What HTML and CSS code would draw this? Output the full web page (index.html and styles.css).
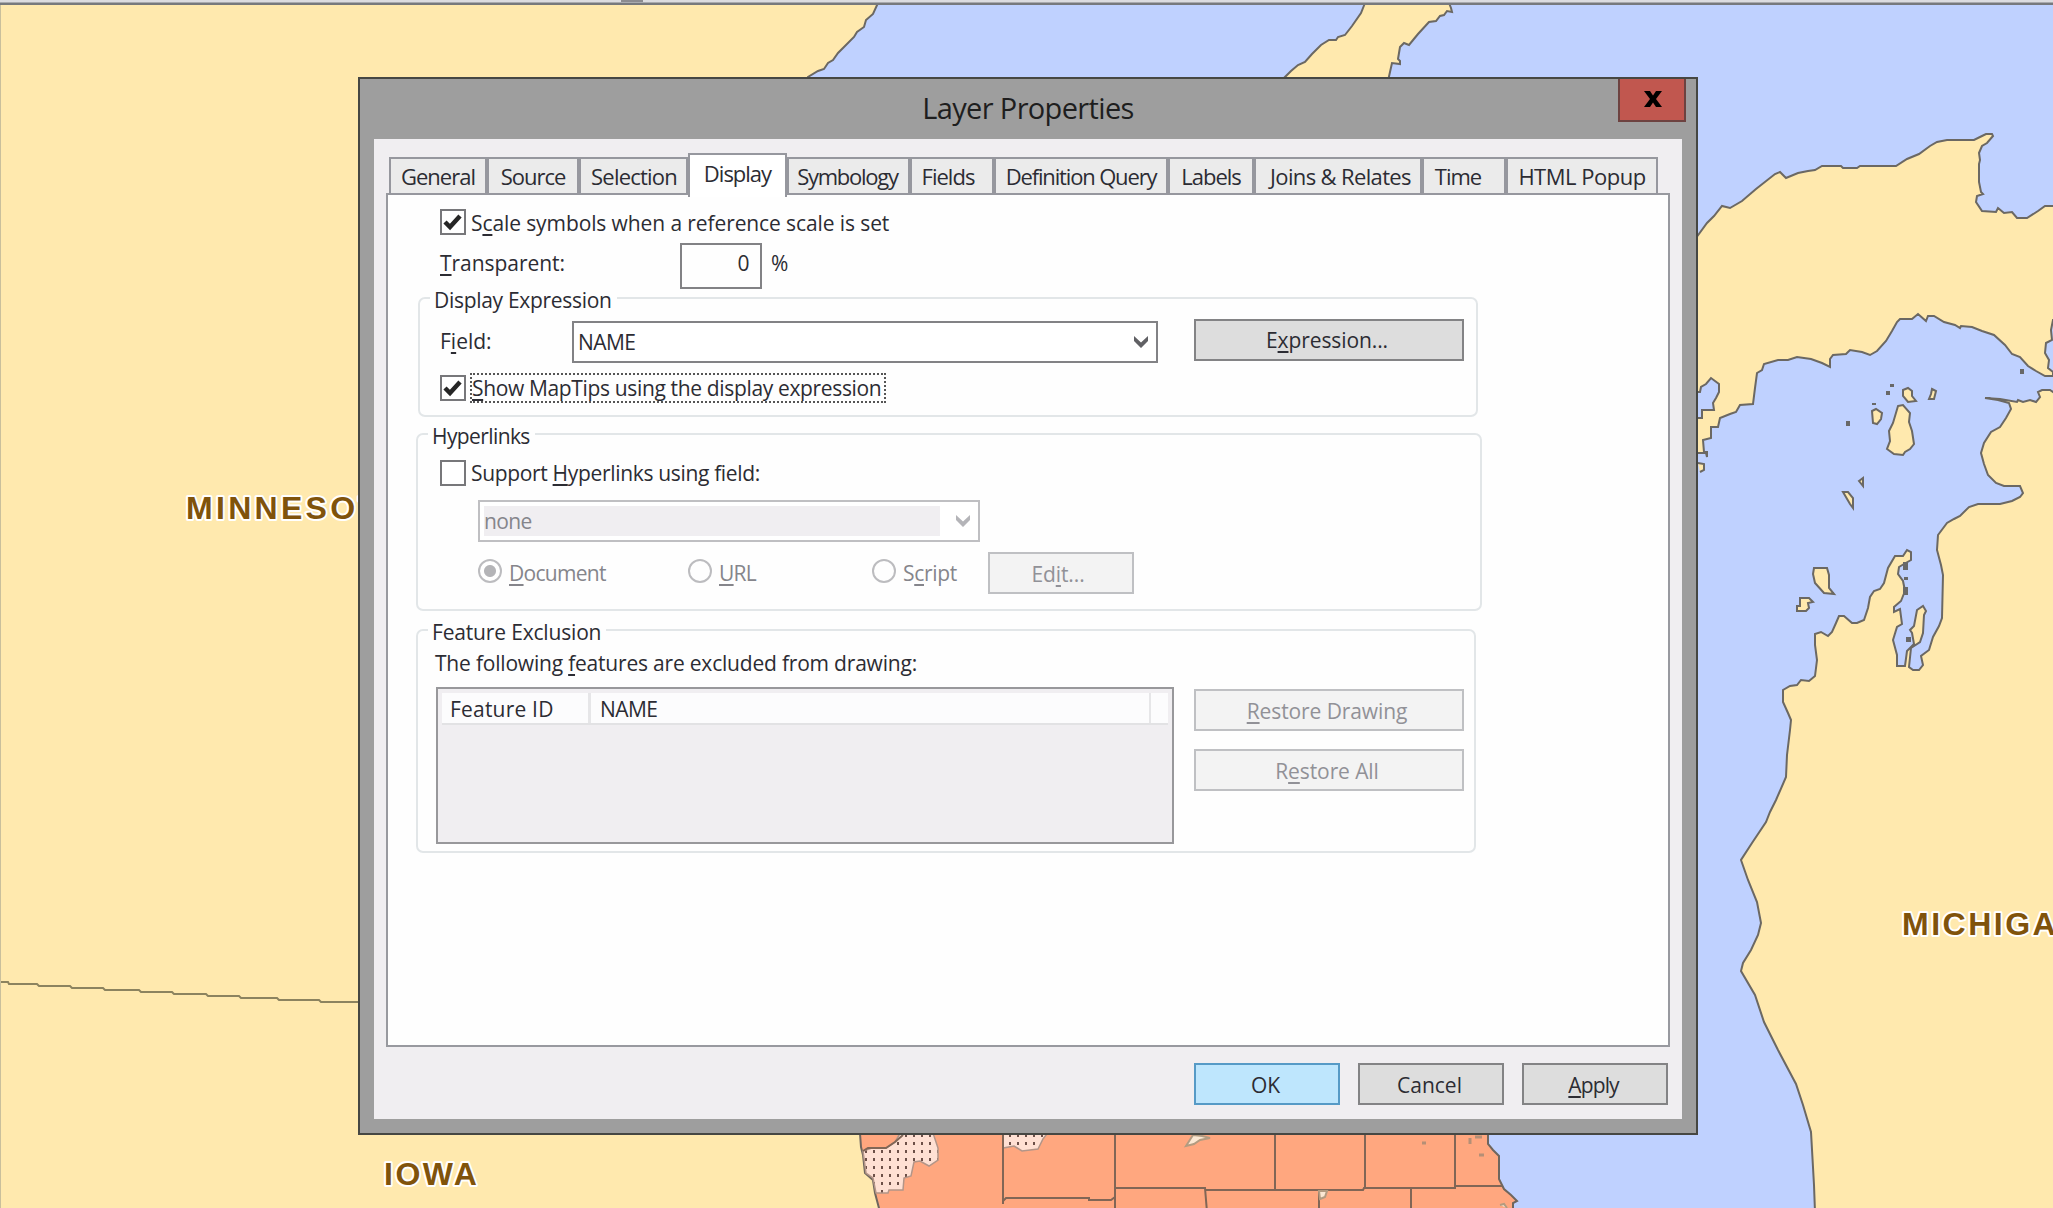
FILE: index.html
```html
<!DOCTYPE html>
<html lang="en">
<head>
<meta charset="utf-8">
<title>Layer Properties</title>
<link rel="stylesheet" href="styles.css">
</head>
<body>
<svg class="map" width="2053" height="1208" viewBox="0 0 2053 1208">
  <defs>
    <pattern id="dots" x="873" y="1150" width="8" height="8" patternUnits="userSpaceOnUse">
      <rect width="8" height="8" fill="#ffe0d3"/><rect width="2" height="3" fill="#6d5048"/>
    </pattern>
  </defs>
  <rect width="2053" height="1208" fill="#bfd1ff"/>
  <g class="land">
    <path d="M-3 3H878L873 14 866 20 864 27 857 32 854 37 843 48 838 53 833 60 828 63 824 69 818 71 808 77 900 900 880 1212H-3Z"/>
    <path d="M1365 3L1361 13 1352 26 1345 35 1338 37 1336 40 1329 40 1321 45 1312 54 1305 62 1298 65 1291 71 1284 78V90H1386L1390 72 1392 63 1400 64V61L1398 59 1400 47 1404 43 1409 45 1418 34 1429 22 1436 21 1440 16 1444 15 1447 11 1452 12 1451 8 1449 3Z"/>
    <path d="M1696 238L1707 223 1714 216 1722 206 1730 208 1742 201 1756 189 1775 174 1780 172 1786 178 1798 173 1808 171 1815 170 1822 166H1841L1843 168H1857L1860 166H1896L1907 159 1919 154 1930 146 1937 142 1947 140H1974L1982 136 1986 134 1992 134 1993 136 1987 143 1982 146 1979 153 1980 160 1979 164V182L1981 192 1983 194 1977 196 1976 202 1982 211 1996 212 1998 208 2004 213 2012 212 2017 218H2027L2038 211 2045 206H2056V320H2053L2051 330 2052 340 2046 343 2045 353 2049 360 2048 368 2053 372V376H2045L2036 371 2028 366 2020 357 2012 354 2005 345 1994 335 1982 331 1972 327 1961 326 1960 328 1955 325 1944 322 1934 316 1928 316 1926 321 1918 314 1912 319H1900L1897 322 1892 331 1886 341 1877 351 1870 355 1862 352 1850 350 1846 354 1833 355 1830 359 1830 367 1822 363 1811 359 1797 357 1788 360H1778L1764 364 1762 370 1757 373 1755 388 1753 404 1740 405 1736 412 1730 414 1720 418 1718 427 1711 427 1711 438 1703 440 1704 452H1707V457L1706 453H1696Z"/>
    <path d="M1985 398L2000 399 2017 402 2018 400 2023 402 2030 400 2036 402 2040 397 2038 392 2042 390H2050L2056 394V1212H1815L1814 1185 1811 1132 1803 1105 1796 1084 1778 1050 1764 1022 1755 995 1741 971 1743 963 1751 950 1758 935 1761 923 1757 902 1748 880 1741 860 1752 843 1766 822 1770 812 1776 800 1786 777 1787 755 1790 730 1791 720 1788 713 1783 702V690L1790 686 1797 685 1801 680 1809 681 1815 676 1817 660 1815 645 1815 634 1821 632 1828 636 1832 632 1836 623 1839 616 1844 616 1852 623H1857L1864 620 1868 608 1870 597 1874 591 1880 589 1884 583 1888 568 1895 556H1903L1907 550 1911 552 1911 560 1904 564 1899 567 1898 574 1903 581 1905 591 1901 601 1894 607V612L1900 609 1902 624 1897 627 1893 640 1897 655V666H1905L1907 651 1914 644 1912 633 1910 630 1914 626 1917 610 1923 606 1926 611 1924 615 1923 633 1920 642 1911 648 1909 667 1913 670H1919L1923 665 1921 656 1929 650 1933 637 1939 626 1942 618 1943 575 1941 565 1937 550 1938 535 1947 523 1954 519 1960 516 1969 507 1978 504H2000L2012 501 2020 497 2023 493 2020 486H2004L1996 483 1988 475 1984 464 1981 453 1984 443 1991 432 2000 427 2006 418 2011 409 2009 403 1998 400Z"/>
    <path d="M1898 406L1903 405 1910 413 1909 422 1912 431 1914 444 1910 449 1905 452 1903 455 1894 454 1887 449 1890 441 1889 431 1893 423Z"/>
    <path d="M1872 411L1876 409 1882 413 1881 419 1877 424 1873 423Z"/>
    <path d="M1903 390L1908 388 1912 391 1912 396 1916 401 1908 402 1903 396Z"/>
    <path d="M1932 389L1936 391 1934 399 1929 399 1931 394Z"/>
    <path d="M1843 492L1848 492 1853 498 1853 508 1850 504Z"/><path d="M1859 481L1863 478 1863 486Z"/>
    <path d="M1814 568H1827L1829 575V588L1834 594 1824 593 1815 583 1813 574Z"/>
    <path d="M1800 598H1809L1813 602 1808 603 1809 608 1806 611H1797V606H1800Z"/>
    <path d="M1698 463L1704 464 1704 470 1700 472"/>
  </g>
  <path d="M1696 392H1700L1701 387 1706 384 1711 378 1719 384 1719 392 1716 398 1713 403 1714 410 1702 410V418H1696Z" fill="#bfd1ff" stroke="#6b6863" stroke-width="2"/>
  <g fill="#686868"><rect x="1846" y="421" width="4" height="5"/><rect x="2020" y="369" width="4" height="5"/><rect x="1886" y="391" width="4" height="4"/><rect x="1890" y="384" width="4" height="3"/><rect x="1903" y="562" width="5" height="8"/><rect x="1904" y="577" width="4" height="3"/><rect x="1903" y="587" width="5" height="8"/><rect x="1906" y="637" width="5" height="5"/><rect x="1872" y="403" width="4" height="2"/></g>
  <path d="M0 982H8L9 984H37L39 986H70L72 988H103L105 990H139L141 992H172L174 994H206L208 996H239L241 998H277L279 1000H319L321 1002H360" fill="none" stroke="#8c835f" stroke-width="2"/>
  <g class="counties">
    <path class="fill" d="M859 1120L861 1147 863 1155 865 1173 873 1180 875 1193 880 1212H1513L1513 1203 1517 1201 1511 1195 1504 1189 1499 1179V1156L1493 1150 1488 1144V1120Z"/>
    <path class="mottled" d="M902 1130H932L938 1148V1160L929 1166 920 1161 914 1162 911 1176 904 1178 903 1190H889L888 1193H876L873 1178 866 1173 863 1151 872 1148 886 1148 895 1142Z"/>
    <path class="mottled" d="M1003 1130H1050L1043 1139 1038 1149 1022 1151 1014 1146 1003 1148Z"/>
    <path d="M863 1151L868 1148 886 1148 895 1142 903 1135M1003 1130V1204M1115 1130V1212M1275 1130V1190M1365 1130V1189M1455 1130V1188M1003 1201L1006 1198H1089V1200H1111L1115 1197M1115 1188H1205L1207 1212M1205 1190H1363L1364 1188H1455V1186H1502M1319 1190V1212M1411 1188V1212"/>
    <path class="lake" d="M1186 1146L1193 1135 1202 1136 1210 1138 1200 1140 1194 1144ZM1319 1191H1327L1325 1197 1320 1199ZM1500 1205L1504 1204 1507 1208"/>
    <path class="specks" d="M1422 1143h4M1479 1155h5M1470 1138v6M1475 1137h7"/>
  </g>
  <g class="state-names">
    <text class="minnesota" x="186" y="519">MINNESOTA</text>
    <text x="384" y="1185">IOWA</text>
    <text x="1902" y="935">MICHIGAN</text>
  </g>
  <rect width="1" height="1208" fill="#c9bf9c"/>
  <rect width="2053" height="3" fill="#dcdce0"/><rect y="2.5" width="2053" height="2.5" fill="#77797d"/><rect x="621" width="22" height="2" fill="#8b8b90"/>
</svg>

<section class="dialog">
  <header class="titlebar">
    <h1>Layer Properties</h1>
    <button class="close"><svg width="18" height="16" viewBox="0 0 18 16"><path d="M0 0H6L9 4.5 12 0H18L12 8 18 16H12L9 11.500 6 16H0L6 8Z"/></svg></button>
  </header>
  <div class="client">
    <nav class="tabs">
      <span class="tab w-general">General</span><span class="tab w-source">Source</span><span class="tab w-selection">Selection</span><span class="tab active">Display</span><span class="tab w-symbology">Symbology</span><span class="tab w-fields">Fields</span><span class="tab w-query">Definition Query</span><span class="tab w-labels">Labels</span><span class="tab w-joins">Joins &amp; Relates</span><span class="tab w-time">Time</span><span class="tab w-popup">HTML Popup</span>
    </nav>
    <main class="page">
      <label class="row scale"><span class="check"><svg viewBox="0 0 20 18"><path d="M2 9L7 14 17 3"/></svg></span><span class="label">S<u>c</u>ale symbols when a reference scale is set</span></label>
      <div class="row transparency"><span class="caption"><u>T</u>ransparent:</span><span class="number">0</span><span>%</span></div>

      <section class="group expression">
        <h2>Display Expression</h2>
        <div class="row field"><span class="caption">F<u>i</u>eld:</span><span class="combo">NAME<svg class="chevron" viewBox="0 0 14 12"><path d="M0 0L7 6.500 14 0V5L7 12 0 5Z"/></svg></span><button class="wide">E<u>x</u>pression...</button></div>
        <label class="row maptips"><span class="check"><svg viewBox="0 0 20 18"><path d="M2 9L7 14 17 3"/></svg></span><span class="focus"><u>S</u>how MapTips using the display expression</span></label>
      </section>

      <section class="group links">
        <h2>Hyperlinks</h2>
        <label class="row support"><span class="check"></span><span class="label">Support <u>H</u>yperlinks using field:</span></label>
        <div class="combo disabled"><span class="value">none</span><svg class="chevron" viewBox="0 0 14 12"><path d="M0 0L7 6.500 14 0V5L7 12 0 5Z"/></svg></div>
        <div class="row kinds">
          <label class="radio on"><i></i><span><u>D</u>ocument</span></label>
          <label class="radio url"><i></i><span><u>U</u>RL</span></label>
          <label class="radio script"><i></i><span>S<u>c</u>ript</span></label>
          <button class="edit off">Ed<u>i</u>t...</button>
        </div>
      </section>

      <section class="group exclusion">
        <h2>Feature Exclusion</h2>
        <p>The following <u>f</u>eatures are excluded from drawing:</p>
        <div class="row columns">
          <div class="list"><div class="head"><span class="id">Feature ID</span><span class="name">NAME</span><span class="rest"></span></div></div>
          <div class="stack"><button class="wide off"><u>R</u>estore Drawing</button><button class="wide off">R<u>e</u>store All</button></div>
        </div>
      </section>
    </main>
    <footer class="actions"><button class="ok">OK</button><button>Cancel</button><button class="apply"><u>A</u>pply</button></footer>
  </div>
</section>
</body>
</html>
```
FILE: styles.css
```css
* { box-sizing: border-box; }
body { margin: 0; width: 2053px; height: 1208px; overflow: hidden; position: relative;
  font: 21px/26px "Open Sans", "Noto Sans", sans-serif; letter-spacing: -0.6px; color: #2c2c33; background: #bfd1ff; }
h1, h2, p { margin: 0; font: inherit; }
u { text-decoration: underline; text-decoration-thickness: 2px; text-underline-offset: 3px; text-decoration-skip-ink: none; }

.map { display: block; }
.land path { fill: #ffe9ae; stroke: #6b6863; stroke-width: 2; }
.counties path { fill: none; stroke: #816656; stroke-width: 2; }
.counties .fill { fill: #ffa77f; stroke: #6f665e; }
.counties .mottled { fill: url(#dots); stroke: #b39588; stroke-width: 1.5; }
.counties .lake { fill: #fbe8d3; stroke: #b39b80; }
.counties .specks { stroke: #b58f76; stroke-width: 3; }
.state-names text { font: bold 32px "Liberation Sans", Arial, sans-serif; letter-spacing: 2.500px; fill: #80530b;
  stroke: #fff; stroke-width: 4px; stroke-linejoin: round; paint-order: stroke; }
.state-names .minnesota { letter-spacing: 3.300px; }

.dialog { position: absolute; left: 358px; top: 77px; width: 1340px; height: 1058px; padding: 0 14px 14px;
  border: 2px solid #464743; background: #9e9e9e; }
.titlebar { position: relative; height: 60px; display: flex; justify-content: center; }
.titlebar h1 { font-size: 29px; line-height: 58px; letter-spacing: -0.650px; color: #1e1e1e; }
.close { position: absolute; right: -4px; top: 0; width: 68px; height: 43px; padding: 0 0 2px 2px; border: 2px solid #6d4240; border-top: 0; background: #c1574f; }
.close svg { fill: #000; }
.client { height: 980px; background: #f0eef1; }

.tabs { display: flex; align-items: flex-end; height: 54px; padding-left: 15px; }
.tab { height: 38px; margin-bottom: -2px; flex: none; border: 2px solid #96979e; background: #ebebeb; text-align: center;
  font-size: 22px; line-height: 35px; letter-spacing: -1px; white-space: nowrap; }
.tab.active { position: relative; z-index: 1; width: 99px; height: 44px; margin-bottom: -4px; border-bottom: 0; background: #fff; line-height: 36px; }
.w-general { width: 98px; } .w-source { width: 92px; } .w-selection { width: 109px; letter-spacing: -0.800px; padding-left: 1px; }
.w-symbology { width: 123px; letter-spacing: -1.250px; padding-right: 2px; } .w-fields { width: 84px; padding-right: 8px; } .w-query { width: 174px; letter-spacing: -1.150px; }
.w-labels { width: 86px; } .w-joins { width: 168px; padding-left: 5px; letter-spacing: -0.650px; }
.w-time { width: 84px; padding-right: 12px; } .w-popup { width: 152px; letter-spacing: -0.500px; }

.page { width: 1284px; height: 854px; margin-left: 12px; padding-left: 1px; border: 2px solid #98999f; background: #fefefe; display: flex; flex-direction: column; align-items: flex-start; }
.row { display: flex; align-items: center; white-space: nowrap; }
.check { width: 26px; height: 26px; margin-right: 5px; border: 2px solid #77777a; background: #fff; flex: none; display: flex; align-items: center; justify-content: center; }
.check svg { width: 20px; height: 18px; fill: none; stroke: #262626; stroke-width: 4.500; }
.scale { margin: 14px 0 0 51px; height: 26px; letter-spacing: -0.100px; }
.scale .label { padding-top: 2px; }
.transparency { margin: 8px 0 0 51px; height: 46px; }
.transparency .caption { width: 240px; padding-bottom: 6px; letter-spacing: -0.050px; }
.number { width: 82px; height: 46px; margin-right: 9px; padding: 5px 11px 0 0; border: 2px solid #828285; text-align: right; }
.number + span { padding-bottom: 6px; }

.group { border: 2px solid #e2e6e8; border-radius: 7px; }
.group h2 { width: fit-content; height: 26px; margin: -12px 0 0 10px; padding: 0 5px 0 4px; background: #fefefe; white-space: nowrap; }
.expression { width: 1060px; height: 120px; margin: 8px 0 0 29px; }
.expression h2 { letter-spacing: -0.300px; }
.field { height: 44px; margin: 6px 0 0 20px; }
.field .caption { width: 132px; letter-spacing: 0; }
.combo { width: 586px; height: 42px; margin-top: 2px; padding: 0 8px 0 4px; border: 2px solid #828285; display: flex; align-items: center; justify-content: space-between; background: #fff; }
.chevron { width: 14px; height: 12px; fill: #606064; }
button { height: 42px; width: 146px; padding: 1px 1px 0 0; border: 2px solid #838385; background: #ddd; color: inherit; font: inherit; letter-spacing: -0.100px; white-space: nowrap; }
.wide { width: 270px; padding-right: 4px; }
.field button { margin: 0 0 3px 36px; }
.maptips { height: 30px; margin: 10px 0 0 20px; letter-spacing: -0.350px; }
.maptips .check { margin-right: 4px; }
.focus { height: 30px; width: 416px; border: 2px dotted #555; line-height: 27px; }

.links { width: 1066px; height: 178px; margin: 16px 0 0 27px; }
.support { height: 26px; margin: 11px 0 0 22px; letter-spacing: -0.330px; }
.combo.disabled { width: 502px; margin: 14px 0 0 60px; border-color: #bfbfc2; color: #85858b; }
.disabled .value { width: 456px; height: 30px; line-height: 30px; background: #f0eef1; }
.disabled .chevron { fill: #b4b4b8; }
.kinds { margin: 10px 0 0 60px; height: 42px; color: #85858b; }
.radio { width: 210px; display: flex; align-items: center; gap: 7px; height: 38px; letter-spacing: -0.700px; }
.radio i { width: 24px; height: 24px; margin-bottom: 5px; border: 2px solid #bcbcbf; border-radius: 50%; }
.radio span { padding-bottom: 1px; }
.radio.on i { background: radial-gradient(circle, #b4b4b7 5.500px, #fff 6.500px); }
.radio.url { width: 184px; }
.radio.script { width: 116px; letter-spacing: -0.300px; }
.off { border-color: #bfc0c3; background: #f3f3f3; color: #919197; }
.edit { padding-right: 6px; }

.exclusion { width: 1060px; height: 224px; margin: 18px 0 0 27px; }
.exclusion h2 { letter-spacing: -0.170px; }
.exclusion p { margin: 5px 0 0 17px; white-space: nowrap; letter-spacing: -0.200px; }
.columns { align-items: flex-start; margin: 11px 0 0 18px; gap: 20px; }
.list { width: 738px; height: 157px; padding: 4px 4px; border: 2px solid #98989b; background: #f0eef1; }
.head { display: flex; height: 32px; border-bottom: 2px solid #e2e2e4; background: #fcfcfd; line-height: 32px; }
.head .id { width: 149px; padding-left: 8px; border-right: 3px solid #e6e6e8; letter-spacing: 0.200px; }
.head .name { width: 560px; padding-left: 9px; border-right: 2px solid #e6e6e8; }
.stack { display: flex; flex-direction: column; gap: 18px; padding-top: 2px; }

.actions { display: flex; justify-content: flex-end; gap: 18px; padding: 16px 14px 0 0; }
.actions button { letter-spacing: 0; padding-right: 3px; }
.actions .apply { letter-spacing: -0.900px; }
.actions .ok { border-color: #569ac6; background: #bee6fd; }
```
